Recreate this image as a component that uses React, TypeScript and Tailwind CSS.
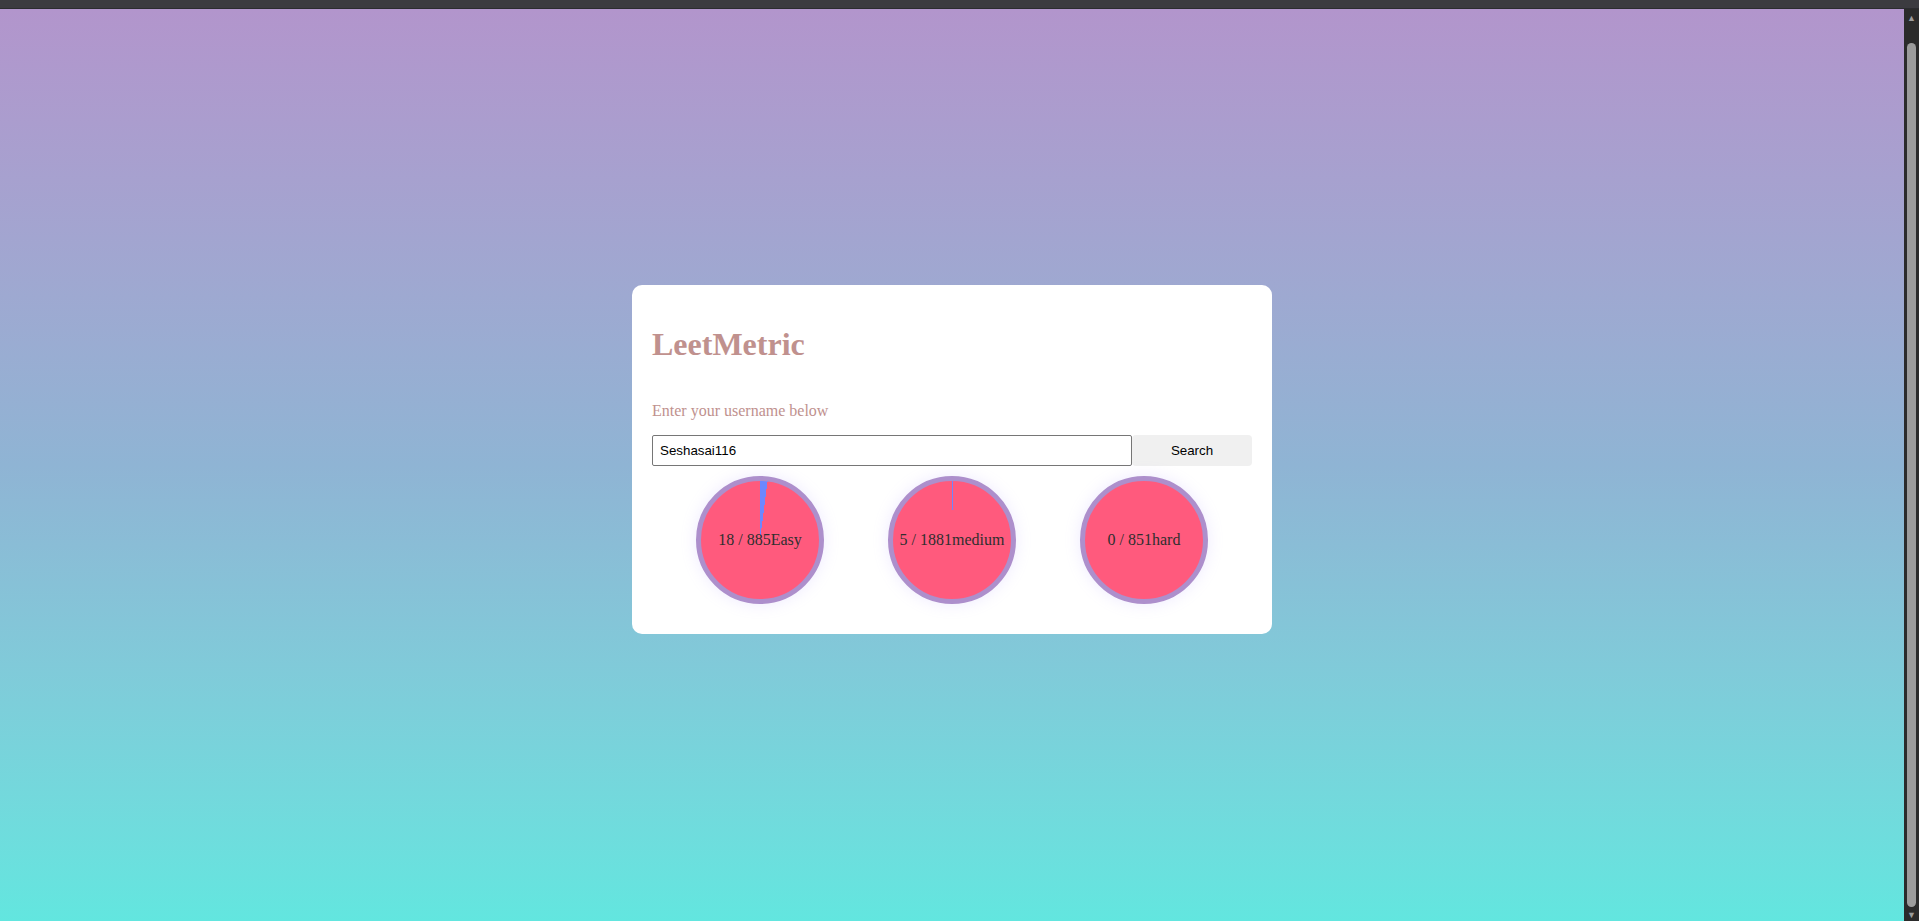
import { useState } from 'react';

const stats = [
  { solved: 18, total: 885, label: 'Easy' },
  { solved: 5, total: 1881, label: 'medium' },
  { solved: 0, total: 851, label: 'hard' },
];

function ProgressCircle({ solved, total, label }: { solved: number; total: number; label: string }) {
  const pct = total ? (solved / total) * 100 : 0;
  return (
    <div
      className="w-[128px] h-[128px] rounded-full border-[5px] border-[#ad8fcc] flex items-center justify-center shadow-[0_0_16px_rgba(170,150,255,0.2)]"
      style={{
        background: `conic-gradient(#6d87ff 0% ${pct}%, #ff5a7d ${pct}% 100%)`,
      }}
    >
      <span className="text-[16px] leading-[18px] text-[#2f2f2f] font-['Liberation_Serif',serif]">
        {solved} / {total}
        {label}
      </span>
    </div>
  );
}

// the browser's own scrollbar, drawn
function FakeScrollbar() {
  return (
    <div className="w-[15px] bg-[#2b2b2b] flex flex-col items-center pt-[4px] pb-[2px]">
      <span className="text-[9px] leading-[9px] text-[#9c9c9c]">▲</span>
      <div className="mt-[21px] flex-1 w-[9px] rounded-full bg-[#9c9c9c]"></div>
      <span className="mt-[3px] text-[9px] leading-[9px] text-[#9c9c9c]">▼</span>
    </div>
  );
}

export default function App() {
  const [username, setUsername] = useState('Seshasai116');

  return (
    <div className="h-screen overflow-hidden flex flex-col bg-[#2b2b2b]">
      <div className="h-[9px] shrink-0 bg-[#3c3b40] border-b border-[#2c2c30]"></div>
      <div className="flex-1 flex">
        <div className="flex-1 bg-gradient-to-b from-[#b295cc] via-[#8fb4d4] to-[#62e6df] flex justify-center items-start pt-[276px]">
          <div className="w-[640px] h-[349px] rounded-[10px] bg-white px-5 pt-5 flex flex-col font-['Liberation_Serif',serif]">
            <h1 className="mt-[21px] text-[32px] leading-[37px] font-bold text-[#c0918e]">LeetMetric</h1>
            <p className="mt-[39px] text-[16px] leading-[18px] text-[#c0918e]">Enter your username below</p>

            <div className="mt-[15px] flex h-[31px]">
              <input
                value={username}
                onChange={(e) => setUsername(e.target.value)}
                className="flex-1 h-full border border-[#767676] rounded-[2px] px-[7px] text-[13.33px] text-black bg-white outline-none font-['Liberation_Sans',Arial,sans-serif]"
              />
              <button className="w-[120px] h-full bg-[#f0f0f0] rounded-[4px] text-[13.33px] text-black font-['Liberation_Sans',Arial,sans-serif]">
                Search
              </button>
            </div>

            <div className="mt-[10px] flex justify-center gap-16">
              {stats.map((s) => (
                <ProgressCircle key={s.label} {...s} />
              ))}
            </div>
          </div>
        </div>
        <FakeScrollbar />
      </div>
    </div>
  );
}
